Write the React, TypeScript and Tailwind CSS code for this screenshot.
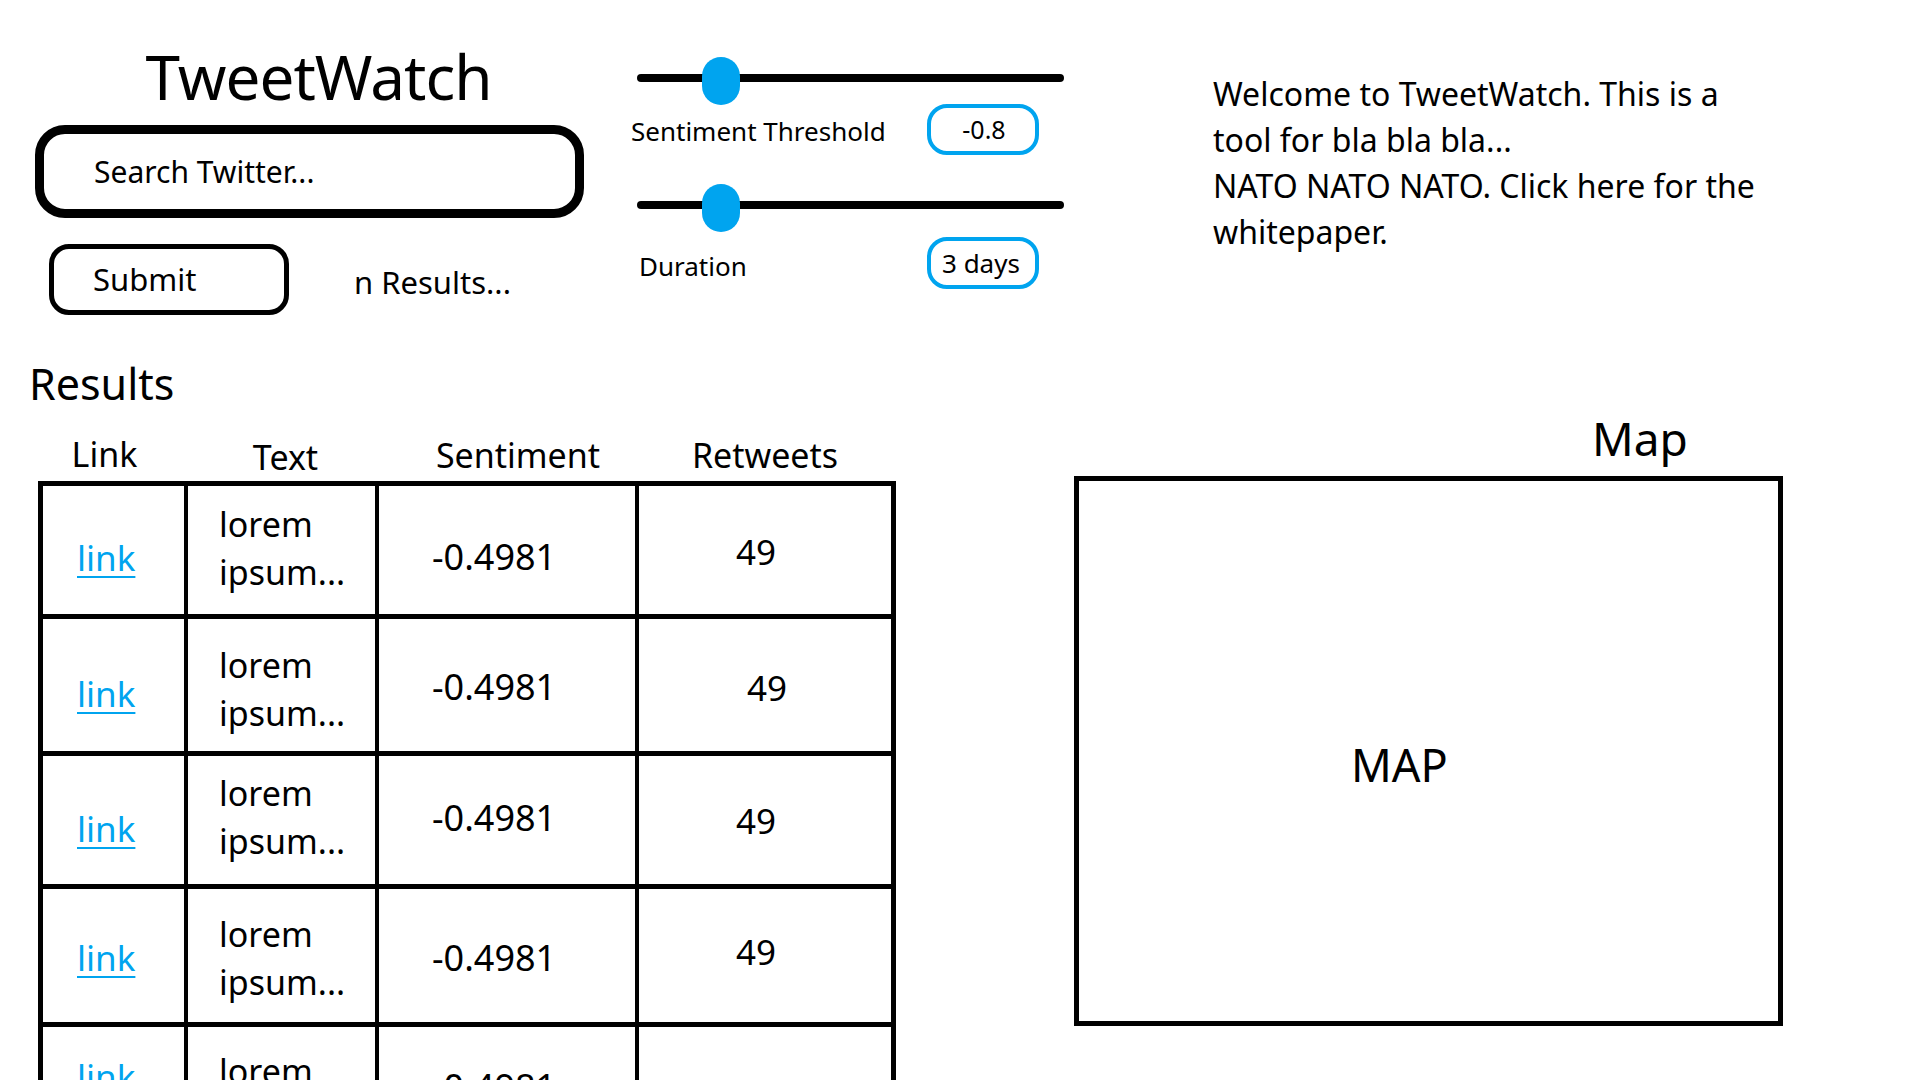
import React from "react";

type Row = {
  h: string;
  link: string;
  lorem: string;
  sent: string;
  num: string;
  numPl: string;
};

const rows: Row[] = [
  { h: "h-[133px]", link: "pt-[14px]", lorem: "pb-[4px]", sent: "pt-[14px]", num: "pt-[2px]", numPl: "pl-[97px]" },
  { h: "h-[137px]", link: "pt-[16px]", lorem: "pt-[8px]", sent: "pt-[4px]", num: "pt-[4px]", numPl: "pl-[108px]" },
  { h: "h-[133px]", link: "pt-[16px]", lorem: "pb-[6px]", sent: "pb-[4px]", num: "pt-[0px]", numPl: "pl-[97px]" },
  { h: "h-[138px]", link: "pt-[4px]", lorem: "pt-[4px]", sent: "pt-[4px]", num: "pb-[8px]", numPl: "pl-[97px]" },
  { h: "h-[140px]", link: "pb-[36px]", lorem: "pt-[0px]", sent: "pb-[16px]", num: "pt-[0px]", numPl: "pl-[97px]" },
];

function Slider() {
  return (
    <div className="relative h-[48px] w-[433px] flex items-center">
      <div className="ml-[6px] w-[427px] h-[8px] rounded-full bg-black -mt-[6px]" />
      <div className="absolute left-[71px] top-0 w-[38px] h-[48px] rounded-full bg-[#00a4ef]" />
    </div>
  );
}

export default function App() {
  return (
    <div className="w-[1920px] h-[1080px] overflow-hidden bg-white text-black font-['Noto_Sans',sans-serif] leading-none">
      {/* Top section */}
      <div className="flex h-[359px]">
        {/* Left column */}
        <div className="ml-[35px] w-[549px] flex flex-col">
          <h1 className="mt-[40px] text-center text-[62px] leading-[72px] tracking-[-1px] font-normal pl-[18px]">
            TweetWatch
          </h1>
          <div className="mt-[13px] h-[93px] border-[9px] border-black rounded-[30px] flex items-center pl-[50px] text-[30px]">
            Search Twitter...
          </div>
          <div className="mt-[26px] flex items-center">
            <button className="ml-[14px] w-[240px] h-[71px] border-[5px] border-black rounded-[20px] pl-[39px] text-[31px] text-left flex items-center">
              Submit
            </button>
            <span className="ml-[65px] mt-[6px] text-[31px]">n Results...</span>
          </div>
        </div>

        {/* Middle column: sliders */}
        <div className="ml-[47px] w-[433px] flex flex-col">
          <div className="mt-[57px]">
            <Slider />
          </div>
          <div className="w-[408px] flex items-center justify-between mt-[-1px]">
            <span className="text-[26px] mt-[2px]">Sentiment Threshold</span>
            <div className="w-[112px] h-[51px] border-[4px] border-[#00a4ef] rounded-[20px] flex items-center justify-center text-[25px] pl-[2px]">
              -0.8
            </div>
          </div>
          <div className="mt-[29px]">
            <Slider />
          </div>
          <div className="w-[408px] flex items-center justify-between mt-[5px]">
            <span className="text-[26px] pl-[8px] mt-[6px]">Duration</span>
            <div className="w-[112px] h-[52px] border-[4px] border-[#00a4ef] rounded-[20px] flex items-center pl-[11px] text-[26px]">
              3 days
            </div>
          </div>
        </div>

        {/* Right column: welcome text */}
        <div className="ml-[149px] mt-[71px] text-[32px] leading-[46px]">
          <div>Welcome to TweetWatch. This is a</div>
          <div>tool for bla bla bla...</div>
          <div>NATO NATO NATO. Click here for the</div>
          <div>whitepaper.</div>
        </div>
      </div>

      {/* Bottom section */}
      <div className="flex">
        {/* Results table */}
        <div className="ml-[29px] w-[867px] flex flex-col">
          <h2 className="text-[43px] leading-[50px] font-normal">Results</h2>
          <div className="mt-[23px] ml-[9px] h-[49px] flex text-[34px] leading-[44px]">
            <div className="w-[145px] text-center pr-[12px]">Link</div>
            <div className="w-[191px] text-center pl-[14px] pt-[3px]">Text</div>
            <div className="w-[260px] text-center pl-[28px] pt-[1px]">Sentiment</div>
            <div className="w-[262px] text-center pt-[1px]">Retweets</div>
          </div>
          <div className="ml-[9px] flex flex-col">
            {rows.map((r, i) => (
              <div
                key={i}
                className={`${r.h} w-[858px] flex border-x-[5px] border-t-[5px] border-black text-[35px]`}
              >
                <div className={`w-[145px] border-r-[4px] border-black flex items-center pl-[34px] ${r.link}`}>
                  <a href="#" className="text-[#00a4ef] underline decoration-2 underline-offset-[5px]">
                    link
                  </a>
                </div>
                <div className={`w-[191px] border-r-[4px] border-black flex items-center pl-[31px] ${r.lorem}`}>
                  <div className="text-[34px] leading-[48px]">
                    <div>lorem</div>
                    <div>ipsum...</div>
                  </div>
                </div>
                <div className={`w-[260px] border-r-[4px] border-black flex items-center pl-[53px] text-[36px] ${r.sent}`}>
                  -0.4981
                </div>
                <div className={`flex-1 flex items-center ${r.numPl} ${r.num}`}>49</div>
              </div>
            ))}
          </div>
        </div>

        {/* Map */}
        <div className="ml-[178px] w-[709px] flex flex-col">
          <div className="mt-[53px] pl-[518px] text-[46px] leading-[52px]">Map</div>
          <div className="mt-[12px] h-[550px] border-[5px] border-black flex items-center pl-[272px] pt-[26px] text-[45px]">
            MAP
          </div>
        </div>
      </div>
    </div>
  );
}
